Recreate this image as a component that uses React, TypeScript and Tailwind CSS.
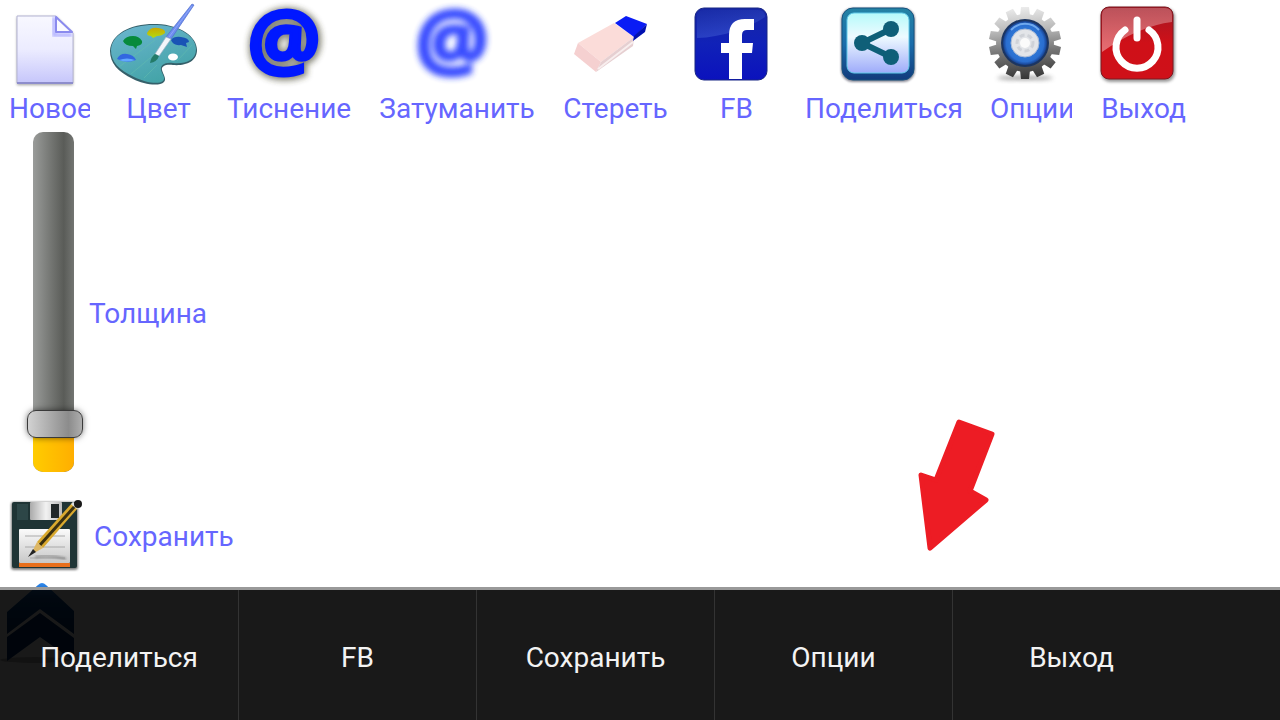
import React, { useState } from 'react';

const NewIcon = () => (
  <svg viewBox="0 0 90 90" className="w-[90px] h-[90px]" aria-hidden="true">
    <defs>
      <linearGradient id="page" x1="0" y1="0" x2="0" y2="1">
        <stop offset="0" stopColor="#f8f8ff" />
        <stop offset="0.5" stopColor="#ececff" />
        <stop offset="1" stopColor="#c6c6fb" />
      </linearGradient>
      <filter id="pageBlur"><feGaussianBlur stdDeviation="1.5" /></filter>
    </defs>
    <path d="M17 17H56L73 34V85H17Z" fill="#777" opacity="0.7" filter="url(#pageBlur)" />
    <path d="M17 16H56L73 33V83H17Z" fill="url(#page)" stroke="#b4b4d4" />
    <path d="M54 17V35H72" fill="none" stroke="#b9b9ff" strokeWidth="4" filter="url(#pageBlur)" />
    <path d="M56 17V32H72Z" fill="#fafaff" stroke="#8a8aee" strokeWidth="2" strokeLinejoin="round" />
    <path d="M17 83H73" stroke="#8d8dcc" strokeWidth="2" />
  </svg>
);

const PaletteIcon = () => (
  <svg viewBox="0 0 90 90" className="w-[90px] h-[90px]" aria-hidden="true">
    <defs>
      <linearGradient id="wood" x1="0" y1="0" x2="0.5" y2="1">
        <stop offset="0" stopColor="#6cb6d0" />
        <stop offset="1" stopColor="#44a4a8" />
      </linearGradient>
      <linearGradient id="yellowPaint" x1="0" y1="0" x2="0" y2="1">
        <stop offset="0" stopColor="#c9a800" />
        <stop offset="1" stopColor="#b4dc10" />
      </linearGradient>
    </defs>
    <path d="M1 51C2 33 23 23 48 24C72 25 88 37 88 50C88 62 76 66 64 65C57 64 52 66 53 70C54 74 58 79 55 82C50 87 34 84 24 79C9 72 1 63 1 51Z" fill="#35606a" />
    <path d="M2 50C3 33 24 24 48 25C72 26 87 37 87 49C87 61 76 64 64 63C56 62 51 65 52 70C53 74 57 78 54 81C49 85 35 82 25 77C10 70 2 62 2 50Z" fill="url(#wood)" />
    <path d="M10 67L46 40M22 74L54 47M35 78L48 65M68 61L83 45" stroke="#65bfae" strokeWidth="1" opacity="0.5" />
    <path d="M14 41Q17 36 24 36Q30 36 33 41Q34 45 28 46L27 49L24 46Q16 46 14 41Z" fill="#078a3c" />
    <path d="M38 33Q41 27 49 28Q57 29 56 33Q53 36 48 36L44 38L42 36Q38 36 38 33Z" fill="url(#yellowPaint)" />
    <path d="M62 40Q65 36 72 37Q80 38 80 42L77 43L78 47L72 45Q64 46 62 40Z" fill="#1953b5" />
    <path d="M8 59Q11 53 18 54Q25 55 27 60Q18 64 8 59Z" fill="#3267e0" />
    <path d="M10 60Q18 63 26 60Q18 57 10 60Z" fill="#63a8ff" />
    <ellipse cx="64" cy="57" rx="5" ry="3.5" fill="#fff" />
    <path d="M83 4L85 5L62 39L57 37Z" fill="#6d8df0" stroke="#526ecb" strokeWidth="0.7" />
    <path d="M83 6L60 37" stroke="#8fa5fa" strokeWidth="1" />
    <path d="M57 37L62 39L50 56L46 54Z" fill="#f2f5fa" stroke="#9fb3c5" strokeWidth="0.7" />
    <path d="M46 54L50 56Q48 62 41 63Q42 57 46 54Z" fill="#237b68" />
  </svg>
);

const EmbossIcon = () => (
  <svg viewBox="0 0 90 90" className="w-[90px] h-[90px] overflow-visible font-['Open_Sans',sans-serif]" aria-hidden="true">
    <defs>
      <filter id="embossBlur" x="-20%" y="-20%" width="140%" height="140%"><feGaussianBlur stdDeviation="3" /></filter>
    </defs>
    <text x="45" y="70" textAnchor="middle" fontSize="82" fontWeight="700" fill="#33331c" stroke="#33331c" strokeWidth="7" filter="url(#embossBlur)" opacity="0.6">@</text>
    <text x="44" y="69" textAnchor="middle" fontSize="82" fontWeight="700" fill="#0018ff" stroke="#0018ff" strokeWidth="3">@</text>
  </svg>
);

const BlurIcon = () => (
  <svg viewBox="0 0 90 90" className="w-[90px] h-[90px] overflow-visible font-['Open_Sans',sans-serif]" aria-hidden="true">
    <defs>
      <filter id="softBlur" x="-20%" y="-20%" width="140%" height="140%"><feGaussianBlur stdDeviation="3" /></filter>
    </defs>
    <text x="44" y="69" textAnchor="middle" fontSize="82" fontWeight="700" fill="#2038ff" stroke="#2038ff" strokeWidth="3" filter="url(#softBlur)" opacity="0.9">@</text>
  </svg>
);

const EraserIcon = () => (
  <svg viewBox="0 0 90 90" className="w-[90px] h-[90px]" aria-hidden="true">
    <path d="M12 43L48 23L68 37L35 62Z" fill="#fbdcd9" />
    <path d="M12 43L35 62L30 72L8 54Z" fill="#f5d0d0" />
    <path d="M35 62L68 37L67 46L30 72Z" fill="#e6cfd1" />
    <path d="M32 69L67 42" stroke="#f8eeee" strokeWidth="2" />
    <path d="M49 23L60 16L81 24L68 37Z" fill="#0a1cf5" />
    <path d="M81 24L79 32L67 41L68 36Z" fill="#0010b0" />
  </svg>
);

const FacebookIcon = () => (
  <svg viewBox="0 0 90 90" className="w-[90px] h-[90px]" aria-hidden="true">
    <defs>
      <linearGradient id="fbBlue" x1="0" y1="0" x2="0" y2="1">
        <stop offset="0" stopColor="#1727a5" />
        <stop offset="0.5" stopColor="#1021b8" />
        <stop offset="1" stopColor="#0b12bd" />
      </linearGradient>
      <linearGradient id="fbShine" x1="0" y1="0" x2="0.4" y2="1">
        <stop offset="0" stopColor="#1a2fa8" />
        <stop offset="1" stopColor="#4563d8" />
      </linearGradient>
    </defs>
    <rect x="8" y="8" width="72" height="72" rx="9" fill="url(#fbBlue)" stroke="#182684" />
    <path d="M10 17Q10 10 17 10H71Q78 10 78 17Q48 36 10 38Z" fill="url(#fbShine)" opacity="0.5" />
    <path d="M42 79V53H34V43H42V35Q42 19 58 19H67V30H60Q55 30 55 35V43H66L65 53H55V79Z" fill="#fff" />
  </svg>
);

const ShareIcon = () => (
  <svg viewBox="0 0 90 90" className="w-[90px] h-[90px]" aria-hidden="true">
    <defs>
      <linearGradient id="shareFrame" x1="0" y1="0" x2="0" y2="1">
        <stop offset="0" stopColor="#2483a4" />
        <stop offset="0.5" stopColor="#1a6cab" />
        <stop offset="1" stopColor="#123b7c" />
      </linearGradient>
      <linearGradient id="shareFace" x1="0" y1="0" x2="0" y2="1">
        <stop offset="0" stopColor="#b5fafa" />
        <stop offset="0.4" stopColor="#eefaff" />
        <stop offset="1" stopColor="#9eabfa" />
      </linearGradient>
      <filter id="shareBlur"><feGaussianBlur stdDeviation="1.2" /></filter>
    </defs>
    <rect x="7" y="8" width="74" height="74" rx="12" fill="#556" opacity="0.7" filter="url(#shareBlur)" />
    <rect x="8" y="8" width="72" height="72" rx="11" fill="url(#shareFrame)" stroke="#17527f" />
    <rect x="13" y="13" width="62" height="60" rx="7" fill="url(#shareFace)" stroke="#62cbe9" />
    <path d="M57 29L28 43L57 57" fill="none" stroke="#0f5f78" strokeWidth="6" />
    <circle cx="28" cy="43" r="8" fill="#0f5f78" />
    <circle cx="57" cy="29" r="8" fill="#0f5f78" />
    <circle cx="57" cy="57" r="8" fill="#0f5f78" />
  </svg>
);

const teeth = Array.from({ length: 14 }, (_, i) => (i * 360) / 14);

const GearIcon = () => (
  <svg viewBox="0 0 90 90" className="w-[90px] h-[90px]" aria-hidden="true">
    <defs>
      <linearGradient id="steel" gradientUnits="userSpaceOnUse" x1="40" y1="7" x2="46" y2="80">
        <stop offset="0" stopColor="#ececec" />
        <stop offset="0.3" stopColor="#bbb" />
        <stop offset="0.6" stopColor="#777" />
        <stop offset="1" stopColor="#333" />
      </linearGradient>
      <radialGradient id="blueRing">
        <stop offset="0.6" stopColor="#2f78d6" />
        <stop offset="0.85" stopColor="#2a6ed0" />
        <stop offset="1" stopColor="#163f8c" />
      </radialGradient>
      <mask id="gearMask">
        <circle cx="43" cy="43" r="29" fill="#fff" />
        {teeth.map((angle) => (
          <path key={angle} d="M38 16L39 7H47L48 16Z" fill="#fff" transform={`rotate(${angle} 43 43)`} />
        ))}
      </mask>
      <filter id="gearBlur" x="-20%" y="-100%" width="140%" height="300%"><feGaussianBlur stdDeviation="2" /></filter>
    </defs>
    <ellipse cx="43" cy="78" rx="28" ry="2" fill="#555" opacity="0.6" filter="url(#gearBlur)" />
    <rect width="90" height="90" fill="url(#steel)" mask="url(#gearMask)" />
    <circle cx="43" cy="43" r="24" fill="#1c3560" />
    <circle cx="43" cy="43" r="22" fill="url(#blueRing)" />
    <path d="M29 30A19 19 0 0 1 57 30" fill="none" stroke="#6fa9ee" strokeWidth="2" />
    <circle cx="43" cy="43" r="14" fill="#e3e5e9" stroke="#a9bad6" />
    <circle cx="43" cy="43" r="8" fill="none" stroke="#cfd2d8" strokeWidth="3" strokeDasharray="5 3" />
    <circle cx="43" cy="43" r="5" fill="#fbfbfb" />
  </svg>
);

const PowerIcon = () => (
  <svg viewBox="0 0 90 90" className="w-[90px] h-[90px]" aria-hidden="true">
    <defs>
      <linearGradient id="powerRed" x1="0" y1="0" x2="0" y2="1">
        <stop offset="0" stopColor="#a31824" />
        <stop offset="0.5" stopColor="#cf1018" />
        <stop offset="1" stopColor="#cf1019" />
      </linearGradient>
      <linearGradient id="powerShine" x1="0" y1="0" x2="0" y2="1">
        <stop offset="0" stopColor="#fff" stopOpacity="0.25" />
        <stop offset="1" stopColor="#fff" stopOpacity="0.4" />
      </linearGradient>
      <filter id="powerBlur"><feGaussianBlur stdDeviation="1.5" /></filter>
    </defs>
    <rect x="7" y="8" width="74" height="74" rx="9" fill="#555" opacity="0.6" filter="url(#powerBlur)" />
    <rect x="7" y="7" width="72" height="72" rx="8" fill="url(#powerRed)" stroke="#7c1820" />
    <path d="M8 15Q8 8 15 8H71Q78 8 78 15V22Q45 26 8 52Z" fill="url(#powerShine)" />
    <path d="M31 30A21 21 0 1 0 55 30" fill="none" stroke="#fff" strokeWidth="7" strokeLinecap="round" />
    <path d="M43 20V38" stroke="#fff" strokeWidth="7" strokeLinecap="round" />
  </svg>
);

const SaveIcon = () => (
  <svg viewBox="0 0 90 90" className="w-[90px] h-[90px]" aria-hidden="true">
    <defs>
      <linearGradient id="shutter" x1="0" y1="0" x2="1" y2="0">
        <stop offset="0" stopColor="#aaa" />
        <stop offset="0.5" stopColor="#f2f2f2" />
        <stop offset="1" stopColor="#b9b9b9" />
      </linearGradient>
      <linearGradient id="sticker" x1="0" y1="0" x2="0" y2="1">
        <stop offset="0" stopColor="#fbfbfb" />
        <stop offset="1" stopColor="#c8c8c8" />
      </linearGradient>
      <filter id="saveBlur"><feGaussianBlur stdDeviation="1" /></filter>
    </defs>
    <rect x="11" y="12" width="67" height="68" rx="3" fill="#444" opacity="0.7" filter="url(#saveBlur)" />
    <rect x="12" y="12" width="65" height="66" rx="2" fill="#1f3435" />
    <rect x="17" y="14" width="11" height="16" fill="#2d4647" />
    <rect x="30" y="12" width="32" height="18" rx="1" fill="url(#shutter)" />
    <rect x="51" y="14" width="8" height="14" fill="#222829" />
    <rect x="19" y="39" width="51" height="34" rx="1" fill="url(#sticker)" />
    <path d="M25 46H65M25 57H65M30 68H65" stroke="#aaa" />
    <rect x="19" y="73" width="51" height="4" fill="#e86f1c" />
    <path d="M35 67Q50 64 66 69" stroke="#777" strokeWidth="3" fill="none" opacity="0.5" filter="url(#saveBlur)" />
    <path d="M37 52L72 13L78 18L43 58Z" fill="#d9a92e" />
    <path d="M40 55L75 16" stroke="#3a3010" strokeWidth="3" />
    <path d="M37 52L43 58L34 63L33 60Z" fill="#ddb765" />
    <path d="M28 67L33 59L36 62Z" fill="#222" />
    <path d="M72 13L78 18" stroke="#ddd" strokeWidth="3" />
    <circle cx="78" cy="14" r="4" fill="#191919" />
  </svg>
);

const UpIcon = () => (
  <svg viewBox="0 0 90 90" className="w-[90px] h-[90px]" aria-hidden="true">
    <defs>
      <linearGradient id="chevron" x1="0" y1="0" x2="0" y2="1">
        <stop offset="0" stopColor="#2f8af0" />
        <stop offset="0.3" stopColor="#0b4c99" />
        <stop offset="1" stopColor="#002e6b" />
      </linearGradient>
    </defs>
    <ellipse cx="35" cy="80" rx="35" ry="3" fill="#888" opacity="0.6" />
    <path d="M38 5Q42 1 46 5L74 31V54L40 29L7 54V32Z" fill="url(#chevron)" />
    <path d="M40 33L74 58V81L40 57L7 81V57Z" fill="#003070" />
  </svg>
);

const tools = [
  { label: 'Новое', icon: NewIcon, width: 'w-[90px]' },
  { label: 'Цвет', icon: PaletteIcon, width: 'w-[90px]' },
  { label: 'Тиснение', icon: EmbossIcon, width: 'w-[133px]' },
  { label: 'Затуманить', icon: BlurIcon, width: 'w-[165px]' },
  { label: 'Стереть', icon: EraserIcon, width: 'w-[114px]' },
  { label: 'FB', icon: FacebookIcon, width: 'w-[90px]' },
  { label: 'Поделиться', icon: ShareIcon, width: 'w-[166px]' },
  { label: 'Опции', icon: GearIcon, width: 'w-[91px]' },
  { label: 'Выход', icon: PowerIcon, width: 'w-[96px]' }
];

const menuItems = ['Поделиться', 'FB', 'Сохранить', 'Опции', 'Выход'];

const App: React.FC = () => {
  const [thickness, setThickness] = useState(11);

  return (
    <div className="relative min-h-screen overflow-hidden bg-white font-[Roboto,sans-serif] text-[28px] leading-[38px] text-[#6666ff]">
      {/* Toolbar */}
      <header className="flex gap-[19px]">
        {tools.map(({ label, icon: Icon, width }) => (
          <button key={label} className={`flex shrink-0 flex-col items-center ${width}`}>
            <Icon />
            <span className="max-w-full overflow-hidden whitespace-nowrap pl-[9px]">{label}</span>
          </button>
        ))}
      </header>

      {/* Side tools */}
      <aside className="mt-1 flex flex-col items-start">
        <div className="mb-[18px] flex items-center">
          <div className="relative ml-[27px] mr-[6px] flex h-[340px] w-[56px] pl-[6px]">
            <div className="flex w-[41px] flex-col justify-end overflow-hidden rounded-[10px] bg-linear-to-r from-[#9a9c9a] via-[#5a5c58] via-75% to-[#737572]">
              <div
                className="bg-linear-to-r from-[#ffcc00] to-[#ffae00]"
                style={{ height: `${14 + thickness * 3.12}px` }}
              />
            </div>
            <input
              id="thickness"
              type="range"
              min={0}
              max={100}
              value={thickness}
              onChange={(e) => setThickness(Number(e.target.value))}
              className="absolute inset-0 h-full w-full appearance-none bg-transparent [writing-mode:vertical-lr] [direction:rtl] [&::-webkit-slider-thumb]:h-[28px] [&::-webkit-slider-thumb]:w-[56px] [&::-webkit-slider-thumb]:appearance-none [&::-webkit-slider-thumb]:rounded-[9px] [&::-webkit-slider-thumb]:border [&::-webkit-slider-thumb]:border-[#3a3a3a] [&::-webkit-slider-thumb]:bg-linear-to-r [&::-webkit-slider-thumb]:from-[#d2d2d2] [&::-webkit-slider-thumb]:via-[#8c8c8c] [&::-webkit-slider-thumb]:via-75% [&::-webkit-slider-thumb]:to-[#aeaeae] [&::-webkit-slider-thumb]:shadow-[0_0_6px_#0008]"
            />
          </div>
          <label htmlFor="thickness" className="pt-6">Толщина</label>
        </div>
        <button className="flex items-center gap-1">
          <SaveIcon />
          <span className="pt-1">Сохранить</span>
        </button>
        <button aria-label="Вверх">
          <UpIcon />
        </button>
      </aside>

      {/* Arrow drawn on the canvas */}
      <svg viewBox="0 0 78 132" className="absolute left-[918px] top-[419px] w-[78px]" aria-hidden="true">
        <path
          d="M41 3L74 15L52 72L68 81L12 129L3 56L18 61Z"
          fill="#ed1c24"
          stroke="#ed1c24"
          strokeWidth="5"
          strokeLinejoin="round"
        />
      </svg>

      {/* Options menu */}
      <nav className="absolute inset-x-0 bottom-0 flex h-[133px] border-t-[3px] border-[#999] bg-black/90 bg-clip-padding text-[#f3f3f3]">
        {menuItems.map((item, index) => (
          <button
            key={item}
            className={`w-[238px] pt-[6px] ${index > 0 ? 'border-l border-[#333]' : ''}`}
          >
            {item}
          </button>
        ))}
      </nav>
    </div>
  );
};

export default App;
